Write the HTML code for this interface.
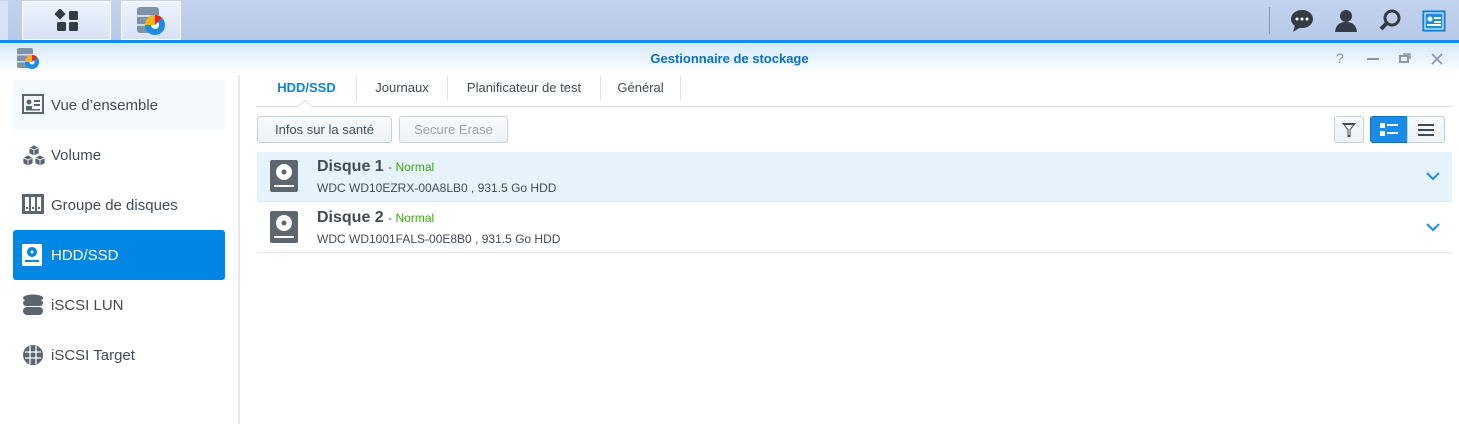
<!DOCTYPE html>
<html><head><meta charset="utf-8"><style>
*{box-sizing:border-box;margin:0;padding:0}
body{width:1459px;height:424px;overflow:hidden;background:#fff;font-family:"Liberation Sans",sans-serif;position:relative;color:#404c5a}
.a{position:absolute}
.top{left:0;top:0;width:1459px;height:41px;background:linear-gradient(#c3d3ee,#b7c9e8);border-bottom:1px solid #8aa}
.blue{left:0;top:40px;width:1459px;height:3px;background:#1a8ce8}
.title{left:0;top:43px;width:1459px;height:32px;background:linear-gradient(#d6e9fb,#fff)}
.tb{top:1px;height:39px;background:linear-gradient(#eef3fb,#d7e2f4);border:1px solid #fff}
.side{left:0;top:75px;width:240px;height:349px;border-right:2px solid #e8e8e8}
.it{left:13px;width:212px;height:50px;border-radius:3px;font-size:15px;line-height:52px;padding-left:38px;color:#414b55}
.it svg{position:absolute;left:9px;top:14px}
.tab{top:76px;height:25px;font-size:13px;line-height:24px;border-right:1px solid #dde3ea;text-align:center;color:#414b55}
.btn{top:116px;height:27px;border:1px solid #c7d1dc;border-radius:3px;background:linear-gradient(#f8fafc,#eef2f6);font-size:13px;line-height:25px;text-align:center}
.row{left:257px;width:1195px;height:50px;border-bottom:1px solid #e3e7eb}
.row .n{position:absolute;left:60px;top:6px;font-size:16px;font-weight:bold;color:#414b55}
.row .n span{font-size:12px;font-weight:normal;color:#5a6673}
.row .n span b{font-weight:normal;color:#3fa80c}
.row .d{position:absolute;left:60px;top:29px;font-size:12px;color:#414b55}
.row svg.h{position:absolute;left:13px;top:8px}
.row svg.c{position:absolute;right:12px;top:20px}
</style></head><body>
<div class="a top"></div>
<div class="a" style="left:0;top:1px;width:8px;height:39px;background:#d7e2f4"></div>
<div class="a tb" style="left:22px;width:89px"></div>
<svg class="a" style="left:55px;top:9px" width="26" height="24"><rect x="1" y="1" width="8" height="8" transform="rotate(45 5 5)" fill="#333b45"/><rect x="14" y="2" width="9" height="9" rx="1.5" fill="#333b45"/><rect x="2" y="13" width="9" height="9" rx="1.5" fill="#333b45"/><rect x="14" y="13" width="9" height="9" rx="1.5" fill="#333b45"/></svg>
<div class="a tb" style="left:121px;width:60px"></div>
<svg class="a" style="left:136px;top:6px" width="32" height="30"><rect x="1" y="1" width="22" height="26" rx="3" fill="#7d93a8"/><rect x="1" y="9" width="22" height="2" fill="#cfd9e3"/><rect x="1" y="18" width="22" height="2" fill="#cfd9e3"/><circle cx="19" cy="19" r="10" fill="#1a8ce8"/><circle cx="19" cy="19" r="4" fill="#fff"/><path d="M19 9 A10 10 0 0 1 26 12 L19 19Z" fill="#e8261f"/><path d="M9 19 A10 10 0 0 1 19 9 L19 19Z" fill="#f3b619"/></svg>
<div class="a" style="left:1269px;top:7px;width:1px;height:27px;background:#8e9aa8"></div>
<svg class="a" style="left:1290px;top:9px" width="24" height="24"><ellipse cx="12" cy="10" rx="11" ry="9" fill="#333b45"/><path d="M5 16 L3 23 L11 18Z" fill="#333b45"/><circle cx="7" cy="10" r="1.5" fill="#fff"/><circle cx="12" cy="10" r="1.5" fill="#fff"/><circle cx="17" cy="10" r="1.5" fill="#fff"/></svg>
<svg class="a" style="left:1334px;top:8px" width="24" height="26"><circle cx="12" cy="8" r="6" fill="#333b45"/><path d="M1 24 Q2 14 12 14 Q22 14 23 24Z" fill="#333b45"/></svg>
<svg class="a" style="left:1378px;top:8px" width="24" height="26"><circle cx="14" cy="10" r="7" fill="none" stroke="#333b45" stroke-width="3"/><path d="M9 15 L3 21" stroke="#333b45" stroke-width="4"/></svg>
<svg class="a" style="left:1422px;top:10px" width="24" height="22"><rect x="1" y="1" width="22" height="20" fill="#1a8ce8" stroke="#0f6fc0"/><rect x="3" y="3" width="18" height="16" fill="#1a8ce8" stroke="#fff" stroke-width="1"/><circle cx="8" cy="9" r="2.5" fill="#fff"/><rect x="12" y="7" width="7" height="2" fill="#fff"/><rect x="12" y="11" width="7" height="2" fill="#fff"/><rect x="5" y="14" width="14" height="2" fill="#fff"/></svg>
<div class="a blue"></div>
<div class="a title"></div>
<svg class="a" style="left:17px;top:48px" width="24" height="22"><rect x="0" y="0" width="16" height="20" rx="2" fill="#7d93a8"/><rect x="0" y="6" width="16" height="1.5" fill="#cfd9e3"/><rect x="0" y="13" width="16" height="1.5" fill="#cfd9e3"/><circle cx="15" cy="14" r="7" fill="#1a8ce8"/><circle cx="15" cy="14" r="2.5" fill="#fff"/><path d="M15 7 A7 7 0 0 1 20 9 L15 14Z" fill="#e8261f"/><path d="M8 14 A7 7 0 0 1 15 7 L15 14Z" fill="#f3b619"/></svg>
<div class="a" style="left:0;width:1459px;top:51px;text-align:center;font-size:13px;font-weight:bold;color:#0a6fc6">Gestionnaire de stockage</div>
<div class="a" style="left:1336px;top:50px;font-size:14px;color:#8a96a3">?</div>
<div class="a" style="left:1367px;top:58px;width:12px;height:2px;background:#8a96a3"></div>
<svg class="a" style="left:1399px;top:52px" width="12" height="12"><rect x="1" y="4" width="8" height="6" fill="none" stroke="#8a96a3" stroke-width="2"/><path d="M4 2 H11 V7" fill="none" stroke="#8a96a3" stroke-width="1.5"/></svg>
<svg class="a" style="left:1431px;top:53px" width="12" height="12"><path d="M1 1 L11 11 M11 1 L1 11" stroke="#8a96a3" stroke-width="1.6"/></svg>

<div class="a side"></div>
<div class="a it" style="top:80px;background:#f4f9fe"><svg width="22" height="20"><rect x="1" y="1" width="20" height="18" fill="none" stroke="#5b6570" stroke-width="2"/><circle cx="7" cy="8" r="2.5" fill="#5b6570"/><rect x="4" y="12" width="6" height="3" fill="#5b6570"/><rect x="12" y="6" width="6" height="2" fill="#5b6570"/><rect x="12" y="10" width="6" height="2" fill="#5b6570"/><rect x="4" y="15" width="14" height="1.5" fill="#5b6570"/></svg>Vue d’ensemble</div>
<div class="a it" style="top:130px"><svg width="24" height="24"><g fill="#5b6570" stroke="#fff" stroke-width="0.8"><path d="M12 1 L17 3.5 L17 9.5 L12 12 L7 9.5 L7 3.5Z"/><path d="M6 11 L11 13.5 L11 19.5 L6 22 L1 19.5 L1 13.5Z"/><path d="M18 11 L23 13.5 L23 19.5 L18 22 L13 19.5 L13 13.5Z"/></g><path d="M7 3.5 L12 6 L17 3.5 M12 6 V12 M1 13.5 L6 16 L11 13.5 M6 16 V22 M13 13.5 L18 16 L23 13.5 M18 16 V22" stroke="#fff" stroke-width="0.8" fill="none"/></svg>Volume</div>
<div class="a it" style="top:180px"><svg width="22" height="20"><rect x="0" y="0" width="22" height="20" fill="#5b6570"/><rect x="3" y="3" width="4" height="14" fill="#fff"/><rect x="9" y="3" width="4" height="14" fill="#fff"/><rect x="15" y="3" width="4" height="14" fill="#fff"/><rect x="4" y="13" width="2" height="2" fill="#5b6570"/><rect x="10" y="13" width="2" height="2" fill="#5b6570"/><rect x="16" y="13" width="2" height="2" fill="#5b6570"/></svg>Groupe de disques</div>
<div class="a it" style="top:230px;background:#0086e5;color:#fff"><svg width="20" height="22"><rect x="0" y="0" width="20" height="22" rx="1" fill="#fff"/><circle cx="10" cy="8" r="5" fill="#0086e5"/><circle cx="10" cy="8" r="1.5" fill="#fff"/><rect x="3" y="16" width="14" height="2" fill="#0086e5"/></svg>HDD/SSD</div>
<div class="a it" style="top:280px"><svg width="22" height="22"><ellipse cx="11" cy="4" rx="10" ry="3.5" fill="#5b6570"/><rect x="1" y="6" width="20" height="6" rx="3" fill="#5b6570"/><rect x="1" y="13" width="20" height="8" rx="4" fill="#5b6570"/></svg>iSCSI LUN</div>
<div class="a it" style="top:330px"><svg width="22" height="22"><circle cx="11" cy="11" r="10" fill="#5b6570"/><path d="M3 8 H19 M3 14 H19 M8 2 V20 M14 2 V20" stroke="#fff" stroke-width="1.3"/></svg>iSCSI Target</div>

<div class="a tab" style="left:257px;width:100px;color:#0a84d8;font-weight:bold">HDD/SSD</div>
<div class="a tab" style="left:357px;width:91px">Journaux</div>
<div class="a tab" style="left:448px;width:153px">Planificateur de test</div>
<div class="a tab" style="left:601px;width:80px">Général</div>
<div class="a" style="left:257px;top:106px;width:1195px;height:1px;background:#d8dee5"></div>
<svg class="a" style="left:298px;top:100px" width="14" height="8"><path d="M0 7 L7 0 L14 7" fill="#fff" stroke="#d8dee5"/></svg>
<div class="a btn" style="left:257px;width:135px">Infos sur la santé</div>
<div class="a btn" style="left:399px;width:109px;color:#9aa4ae">Secure Erase</div>
<div class="a btn" style="left:1334px;width:30px"><svg width="16" height="16" style="margin-top:5px"><path d="M1 1 H15 L9.5 8 V15 H6.5 V8Z" fill="#414b55"/><path d="M4 3 H12 L8.5 7.5 V13 H7.5 V7.5Z" fill="#fff"/></svg></div>
<div class="a btn" style="left:1370px;width:38px;background:#1a8ce8;border-color:#1070c0;border-radius:3px 0 0 3px"><svg width="18" height="14" style="margin-top:6px"><rect x="0" y="0" width="5" height="5" fill="#fff"/><rect x="0" y="8" width="5" height="5" fill="#fff"/><rect x="7" y="1" width="11" height="2" fill="#fff"/><rect x="7" y="9" width="11" height="2" fill="#fff"/></svg></div>
<div class="a btn" style="left:1407px;width:38px;border-radius:0 3px 3px 0"><svg width="16" height="12" style="margin-top:7px"><rect y="0" width="16" height="2" fill="#414b55"/><rect y="5" width="16" height="2" fill="#414b55"/><rect y="10" width="16" height="2" fill="#414b55"/></svg></div>

<div class="a row" style="top:152px;background:#e6f3fc">
<svg class="h" width="28" height="32"><rect width="28" height="32" rx="2" fill="#5e666f"/><circle cx="14" cy="12" r="8" fill="#fff"/><circle cx="14" cy="12" r="2.5" fill="#5e666f"/><rect x="4" y="25" width="20" height="2" fill="#fff"/></svg>
<div class="n">Disque 1 <span>- <b>Normal</b></span></div><div class="d">WDC WD10EZRX-00A8LB0 , 931.5 Go HDD</div>
<svg class="c" width="14" height="9"><path d="M1 1 L7 7 L13 1" fill="none" stroke="#1a8ce8" stroke-width="2"/></svg></div>
<div class="a row" style="top:203px">
<svg class="h" width="28" height="32"><rect width="28" height="32" rx="2" fill="#5e666f"/><circle cx="14" cy="12" r="8" fill="#fff"/><circle cx="14" cy="12" r="2.5" fill="#5e666f"/><rect x="4" y="25" width="20" height="2" fill="#fff"/></svg>
<div class="n">Disque 2 <span>- <b>Normal</b></span></div><div class="d">WDC WD1001FALS-00E8B0 , 931.5 Go HDD</div>
<svg class="c" width="14" height="9"><path d="M1 1 L7 7 L13 1" fill="none" stroke="#1a8ce8" stroke-width="2"/></svg></div>
</body></html>
